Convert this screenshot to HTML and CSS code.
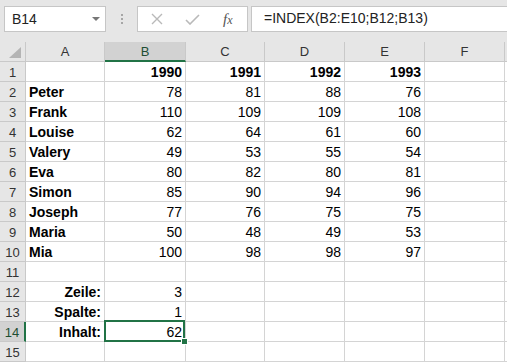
FILE: index.html
```html
<!DOCTYPE html>
<html lang="de">
<head>
    <meta charset="UTF-8">
    <title>INDEX</title>
    <link rel="stylesheet" href="styles.css">
</head>
<body>
    <!-- Formula bar -->
    <div class="toolbar">
        <div class="namebox">
            <span>B14</span>
            <span class="dropdown"></span>
        </div>
        <div class="grip"><i></i><i></i><i></i></div>
        <div class="fx-buttons">
            <svg class="fx-icon" width="12" height="12" viewBox="0 0 12 12">
                <path d="M1 1 L11 11 M11 1 L1 11" stroke="#b9b9b9" stroke-width="1.4" fill="none"/>
            </svg>
            <svg class="fx-icon" width="15" height="11" viewBox="0 0 15 11">
                <path d="M1 6 L5 10 L14 1" stroke="#b9b9b9" stroke-width="1.6" fill="none"/>
            </svg>
            <span class="fx-label">f<span class="fx-x">x</span></span>
        </div>
        <div class="formula">=INDEX(B2:E10;B12;B13)</div>
    </div>

    <!-- Sheet grid -->
    <div class="sheet">
        <div class="corner"></div>
        <div class="col-head">A</div>
        <div class="col-head active">B</div>
        <div class="col-head">C</div>
        <div class="col-head">D</div>
        <div class="col-head">E</div>
        <div class="col-head">F</div>
        <div class="col-head"></div>

        <div class="row-head">1</div>
        <div class="cell"></div>
        <div class="cell num bold">1990</div>
        <div class="cell num bold">1991</div>
        <div class="cell num bold">1992</div>
        <div class="cell num bold">1993</div>
        <div class="cell"></div>
        <div class="cell"></div>

        <div class="row-head">2</div>
        <div class="cell bold">Peter</div>
        <div class="cell num">78</div>
        <div class="cell num">81</div>
        <div class="cell num">88</div>
        <div class="cell num">76</div>
        <div class="cell"></div>
        <div class="cell"></div>

        <div class="row-head">3</div>
        <div class="cell bold">Frank</div>
        <div class="cell num">110</div>
        <div class="cell num">109</div>
        <div class="cell num">109</div>
        <div class="cell num">108</div>
        <div class="cell"></div>
        <div class="cell"></div>

        <div class="row-head">4</div>
        <div class="cell bold">Louise</div>
        <div class="cell num">62</div>
        <div class="cell num">64</div>
        <div class="cell num">61</div>
        <div class="cell num">60</div>
        <div class="cell"></div>
        <div class="cell"></div>

        <div class="row-head">5</div>
        <div class="cell bold">Valery</div>
        <div class="cell num">49</div>
        <div class="cell num">53</div>
        <div class="cell num">55</div>
        <div class="cell num">54</div>
        <div class="cell"></div>
        <div class="cell"></div>

        <div class="row-head">6</div>
        <div class="cell bold">Eva</div>
        <div class="cell num">80</div>
        <div class="cell num">82</div>
        <div class="cell num">80</div>
        <div class="cell num">81</div>
        <div class="cell"></div>
        <div class="cell"></div>

        <div class="row-head">7</div>
        <div class="cell bold">Simon</div>
        <div class="cell num">85</div>
        <div class="cell num">90</div>
        <div class="cell num">94</div>
        <div class="cell num">96</div>
        <div class="cell"></div>
        <div class="cell"></div>

        <div class="row-head">8</div>
        <div class="cell bold">Joseph</div>
        <div class="cell num">77</div>
        <div class="cell num">76</div>
        <div class="cell num">75</div>
        <div class="cell num">75</div>
        <div class="cell"></div>
        <div class="cell"></div>

        <div class="row-head">9</div>
        <div class="cell bold">Maria</div>
        <div class="cell num">50</div>
        <div class="cell num">48</div>
        <div class="cell num">49</div>
        <div class="cell num">53</div>
        <div class="cell"></div>
        <div class="cell"></div>

        <div class="row-head">10</div>
        <div class="cell bold">Mia</div>
        <div class="cell num">100</div>
        <div class="cell num">98</div>
        <div class="cell num">98</div>
        <div class="cell num">97</div>
        <div class="cell"></div>
        <div class="cell"></div>

        <div class="row-head">11</div>
        <div class="cell"></div>
        <div class="cell"></div>
        <div class="cell"></div>
        <div class="cell"></div>
        <div class="cell"></div>
        <div class="cell"></div>
        <div class="cell"></div>

        <div class="row-head">12</div>
        <div class="cell num bold">Zeile:</div>
        <div class="cell num">3</div>
        <div class="cell"></div>
        <div class="cell"></div>
        <div class="cell"></div>
        <div class="cell"></div>
        <div class="cell"></div>

        <div class="row-head">13</div>
        <div class="cell num bold">Spalte:</div>
        <div class="cell num">1</div>
        <div class="cell"></div>
        <div class="cell"></div>
        <div class="cell"></div>
        <div class="cell"></div>
        <div class="cell"></div>

        <div class="row-head active">14</div>
        <div class="cell num bold">Inhalt:</div>
        <div class="cell num selected">62<span class="handle"></span></div>
        <div class="cell"></div>
        <div class="cell"></div>
        <div class="cell"></div>
        <div class="cell"></div>
        <div class="cell"></div>

        <div class="row-head">15</div>
        <div class="cell"></div>
        <div class="cell"></div>
        <div class="cell"></div>
        <div class="cell"></div>
        <div class="cell"></div>
        <div class="cell"></div>
        <div class="cell"></div>
    </div>
</body>
</html>
```

FILE: styles.css
```css
body {
    margin: 0;
    background-color: #fff;
    font-family: "Liberation Sans", Arial, sans-serif;
    color: #000;
    overflow: hidden;
}

/* formula bar */
.toolbar {
    display: flex;
    align-items: flex-start;
    height: 42px;
    padding: 6px 0 0 4px;
    box-sizing: border-box;
    background-color: #e6e6e6;
}
.namebox {
    display: flex;
    align-items: center;
    justify-content: space-between;
    width: 102px;
    height: 26px;
    box-sizing: border-box;
    padding: 0 5px 0 7px;
    border: 1px solid #c6c6c6;
    background-color: #fff;
    font-size: 14px;
    color: #222;
}
.dropdown {
    width: 0;
    height: 0;
    border-left: 4px solid transparent;
    border-right: 4px solid transparent;
    border-top: 4px solid #777;
}
.grip {
    display: flex;
    flex-direction: column;
    gap: 2px;
    margin: 8px 0 0 15px;
}
.grip i {
    width: 2px;
    height: 2px;
    background-color: #a6a6a6;
}
.fx-buttons {
    display: flex;
    align-items: center;
    width: 111px;
    height: 26px;
    box-sizing: border-box;
    margin-left: 14px;
    padding-left: 13px;
    border: 1px solid #c6c6c6;
    background-color: #fff;
}
.fx-icon {
    margin-right: 22px;
}
.fx-icon + .fx-icon {
    margin-right: 23px;
}
.fx-label {
    font-family: "Liberation Serif", serif;
    font-style: italic;
    font-size: 15px;
    color: #555;
}
.fx-x {
    font-size: 12px;
}
.formula {
    flex: 1;
    min-width: 0;
    height: 26px;
    box-sizing: border-box;
    margin-left: 3px;
    padding: 3px 0 0 12px;
    border: 1px solid #c6c6c6;
    border-right: none;
    background-color: #fff;
    font-size: 14px;
    color: #222;
}

/* grid */
.sheet {
    display: grid;
    grid-template-columns: 26px 79px 81px 79px 80px 80px 80px 1fr;
    grid-template-rows: 20px;
    grid-auto-rows: 20px;
}
.corner, .col-head, .row-head {
    box-sizing: border-box;
    background-color: #e6e6e6;
    border-right: 1px solid #c9c9c9;
    border-bottom: 1px solid #c9c9c9;
    font-size: 13px;
    color: #333;
}
.corner {
    position: relative;
}
.corner::after {
    content: "";
    position: absolute;
    right: 4px;
    bottom: 3px;
    width: 0;
    height: 0;
    border-left: 12px solid transparent;
    border-bottom: 11px solid #b4b4b4;
}
.col-head {
    text-align: center;
    line-height: 19px;
}
.row-head {
    text-align: center;
    line-height: 21px;
}
.col-head.active {
    background-color: #d2d2d2;
    border-bottom: 2px solid #217346;
    color: #1e4e33;
}
.row-head.active {
    background-color: #d2d2d2;
    border-right: 2px solid #217346;
    color: #1e4e33;
}
.cell {
    box-sizing: border-box;
    min-width: 0;
    padding: 0 3px;
    border-right: 1px solid #d4d4d4;
    border-bottom: 1px solid #d4d4d4;
    font-size: 14px;
    line-height: 21px;
    white-space: nowrap;
}
.num {
    text-align: right;
}
.bold {
    font-weight: bold;
}
.selected {
    position: relative;
}
.selected::after {
    content: "";
    position: absolute;
    top: -2px;
    left: -1px;
    right: 0;
    bottom: -1px;
    border: 2px solid #217346;
}
.handle {
    position: absolute;
    right: -3px;
    bottom: -4px;
    width: 5px;
    height: 5px;
    background-color: #217346;
    border: 1px solid #fff;
    z-index: 1;
}
```
